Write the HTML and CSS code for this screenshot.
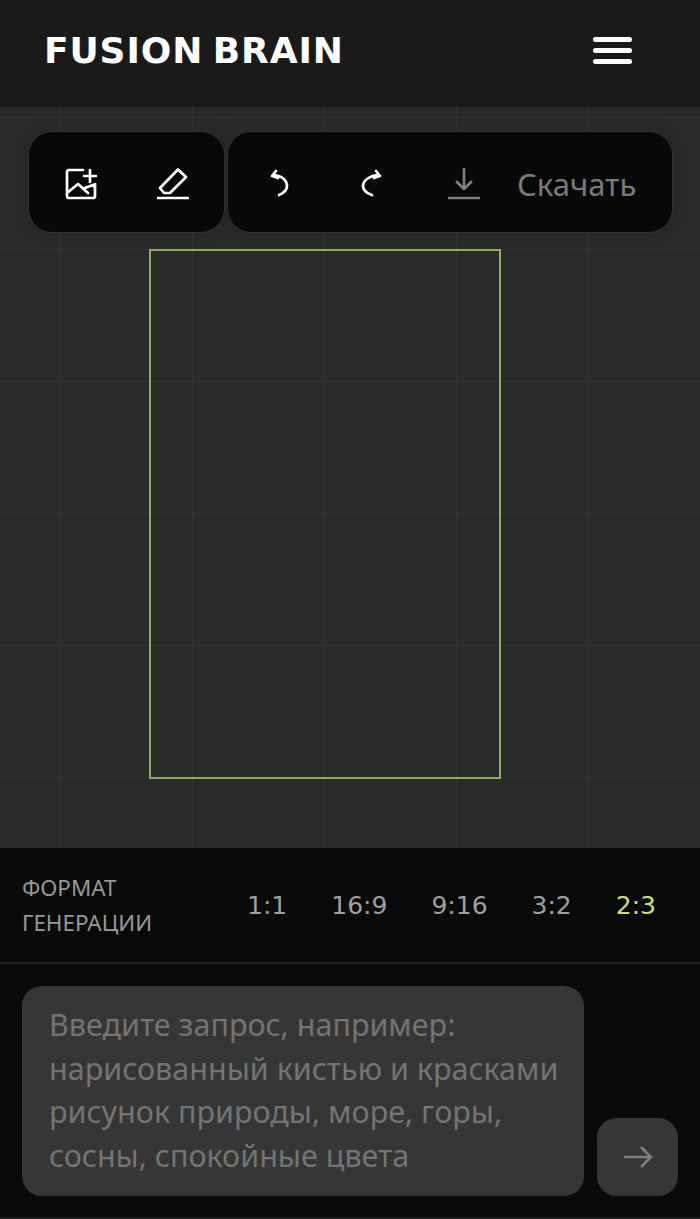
FILE: index.html
```html
<!DOCTYPE html>
<html>
	<head>
		<meta charset="utf-8" />
		<title>Fusion Brain</title>
		<link rel="stylesheet" href="styles.css">
	</head>
	<body>
		<div id="header">
			<div id="logo">FUSION BRAIN</div>
			<div id="burger"><span></span><span></span><span></span></div>
		</div>
		<div id="stage">
			<div id="toolbar">
				<div class="panel panel-left">
					<svg class="icon" viewBox="0 0 32 32"><path d="M18 2H4a2 2 0 0 0-2 2v24a2 2 0 0 0 2 2h24a2 2 0 0 0 2-2V16M2 25l11-9 10 9M20 20l8-3 2 3M25 2v12M19 8h12"/></svg>
					<svg class="icon" viewBox="0 0 32 32"><path d="M21 1.500 29 9 13 25H7L3 20zM0 30h31"/></svg>
				</div>
				<div class="panel panel-right">
					<svg class="icon" viewBox="0 0 32 32"><path d="M12 3 8 8l6 2M9 7c8 0 14 5 14 11 0 4-3 7-8 9"/></svg>
					<svg class="icon" viewBox="0 0 32 32"><path d="M20 3l4 5-6 2M23 7C15 7 7 12 7 18c0 4 3 7 9 9"/></svg>
					<svg class="icon icon-dim" viewBox="0 0 32 32"><path d="M16 1v20M9 14l7 7 7-7M1 30h30"/></svg>
					<div id="download">Скачать</div>
				</div>
			</div>
			<div id="frame"></div>
		</div>
		<div id="formats">
			<div id="format-label">ФОРМАТ<br>ГЕНЕРАЦИИ</div>
			<div id="format-list">
				<span class="format">1:1</span>
				<span class="format">16:9</span>
				<span class="format">9:16</span>
				<span class="format">3:2</span>
				<span class="format active">2:3</span>
			</div>
		</div>
		<div id="prompt">
			<div id="prompt-input">Введите запрос, например: нарисованный кистью и красками рисунок природы, море, горы, сосны, спокойные цвета</div>
			<div id="send">
				<svg viewBox="0 0 30 24"><path d="M1 12h27M18 2l10 10-10 10"/></svg>
			</div>
		</div>
	</body>
</html>
```

FILE: styles.css
```css
body {
	margin: 0px;
	width: 700px;
	height: 1219px;
	overflow: hidden;
	background-color: #1c1c1c;
	font-family: "Noto Sans", sans-serif;
}

#header {
	height: 107px;
	box-sizing: border-box;
	padding: 0px 68px 6px 44px;
	display: flex;
	align-items: center;
	justify-content: space-between;
	background-color: #1a1a1a;
}

#logo {
	font-family: "DejaVu Sans", sans-serif;
	font-weight: bold;
	font-size: 36px;
	letter-spacing: 0.9px;
	word-spacing: -4px;
	color: white;
	white-space: nowrap;
}

#burger {
	width: 39px;
	display: flex;
	flex-direction: column;
	gap: 6px;
}

#burger span {
	height: 5px;
	border-radius: 3px;
	background-color: white;
}

#stage {
	height: 741px;
	box-sizing: border-box;
	padding: 24px 27px 0px 28px;
	background-color: #2a2a2a;
	background-image:
		linear-gradient(#333333 1px, transparent 1px),
		linear-gradient(90deg, #333333 1px, transparent 1px);
	background-size: 132px 132px;
	background-position: 60px 10px;
}

#toolbar {
	display: flex;
	gap: 2px;
}

.panel {
	height: 102px;
	box-sizing: border-box;
	padding-left: 36px;
	display: flex;
	align-items: center;
	gap: 60px;
	background-color: #080808;
	border: 1px solid #333333;
	border-radius: 24px;
	box-shadow: 0px 0px 16px rgba(0, 0, 0, 0.15);
}

.panel-left {
	width: 197px;
}

.panel-right {
	width: 446px;
}

.icon {
	width: 32px;
	height: 32px;
	margin-top: 3px;
	flex: none;
}

.icon path {
	fill: none;
	stroke: white;
	stroke-width: 2.700;
	stroke-linecap: round;
	stroke-linejoin: round;
}

.icon-dim path {
	stroke: #808080;
}

#download {
	margin-left: -23px;
	margin-top: 3px;
	font-size: 31px;
	color: #7a7a7a;
}

#frame {
	width: 352px;
	height: 530px;
	box-sizing: border-box;
	margin-top: 16px;
	margin-left: 121px;
	border: 2px solid #8fb060;
}

#formats {
	height: 116px;
	box-sizing: border-box;
	padding: 0px 44px 0px 22px;
	display: flex;
	align-items: center;
	justify-content: space-between;
	background-color: #0a0a0a;
	border-bottom: 2px solid #222222;
}

#format-label {
	font-size: 22.400px;
	line-height: 35px;
	color: #989898;
}

#format-list {
	display: flex;
	gap: 44px;
}

.format {
	font-family: "DejaVu Sans", sans-serif;
	font-size: 25px;
	color: #a0a0a0;
}

.active {
	color: #c3e37a;
}

#prompt {
	height: 253px;
	box-sizing: border-box;
	padding: 22px 22px 21px 22px;
	display: flex;
	align-items: flex-end;
	gap: 13px;
	background-color: #0a0a0a;
}

#prompt-input {
	width: 562px;
	height: 210px;
	box-sizing: border-box;
	padding: 17px 20px 0px 27px;
	border-radius: 20px;
	background-color: #363636;
	font-size: 30.500px;
	line-height: 43.700px;
	color: #747474;
}

#send {
	width: 81px;
	height: 78px;
	display: flex;
	align-items: center;
	justify-content: center;
	border-radius: 20px;
	background-color: #363636;
}

#send svg {
	width: 30px;
	height: 24px;
}

#send path {
	fill: none;
	stroke: #808080;
	stroke-width: 2.500;
}
```
